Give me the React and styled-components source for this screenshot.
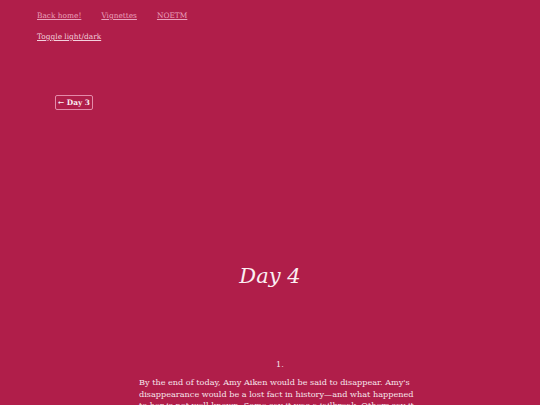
import React from 'react';
import styled, { createGlobalStyle } from 'styled-components';

const Global = createGlobalStyle`
  html, body {
    margin: 0;
    padding: 0;
    background: #b01e4a;
    font-family: 'DejaVu Serif', serif;
    color: #f6e4ea;
  }
`;

const Page = styled.div`
  padding: 10px 37px 0;
`;

const Nav = styled.nav`
  display: flex;
  gap: 20px;
  font-size: 7.4px;
  line-height: 12px;
  a {
    color: #eaa2bd;
    text-decoration: underline;
  }
`;

const Toggle = styled.a`
  display: inline-block;
  margin-top: 9px;
  font-size: 7.4px;
  line-height: 12px;
  color: #f3d2de;
  text-decoration: underline;
`;

const BackRow = styled.div`
  padding: 47px 0 0 18px;
`;

const BackButton = styled.a`
  display: inline-block;
  font-size: 7.4px;
  font-weight: bold;
  line-height: 11px;
  padding: 1px 2px;
  color: #fbeff3;
  border: 1px solid #e48aa9;
  border-radius: 2px;
  text-decoration: none;
`;

const Title = styled.h1`
  margin: 152px 0 0;
  text-align: center;
  font-size: 21px;
  font-style: italic;
  font-weight: normal;
  line-height: 28px;
  color: #fbeff3;
`;

const Article = styled.article`
  width: 282px;
  margin: 69px 0 0 102px;
  font-size: 8.15px;
  line-height: 11.3px;
`;

const Numeral = styled.p`
  margin: 0 0 7px;
  text-align: center;
`;

const Para = styled.p`
  margin: 0;
`;

export default function App() {
  return (
    <>
      <Global />
      <Page>
        <Nav>
          <a href="#">Back home!</a>
          <a href="#">Vignettes</a>
          <a href="#">NOETM</a>
        </Nav>
        <Toggle href="#">Toggle light/dark</Toggle>
        <BackRow>
          <BackButton href="#">← Day 3</BackButton>
        </BackRow>
        <Title>Day 4</Title>
        <Article>
          <Numeral>1.</Numeral>
          <Para>
            By the end of today, Amy Aiken would be said to disappear. Amy's
            disappearance would be a lost fact in history—and what happened
            to her is not well-known. Some say it was a jailbreak. Others say it
            was something else entirely, a quiet walking-away that nobody saw.
          </Para>
        </Article>
      </Page>
    </>
  );
}
